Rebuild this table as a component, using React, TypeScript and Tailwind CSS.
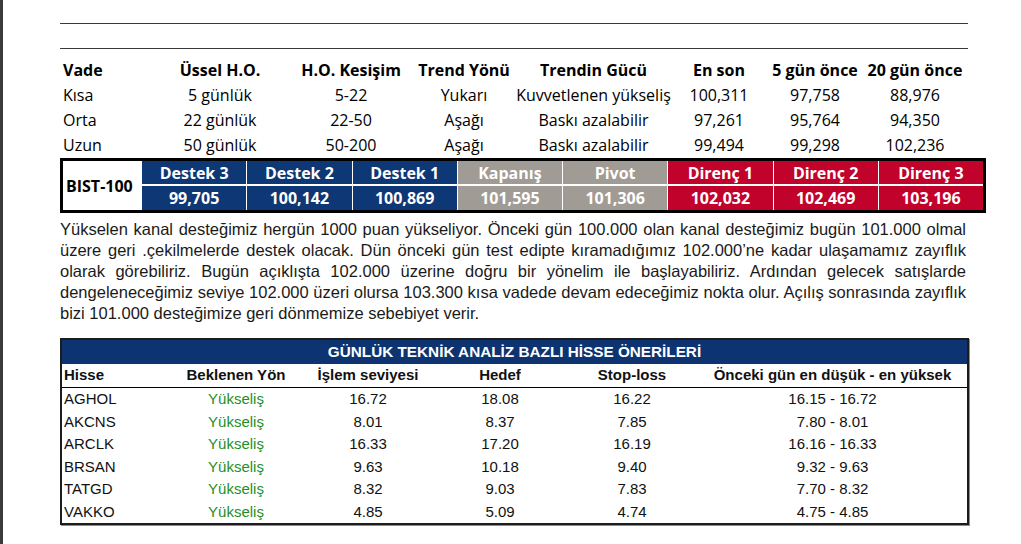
const trendRows = [
  ['Kısa', '5 günlük', '5-22', 'Yukarı', 'Kuvvetlenen yükseliş', '100,311', '97,758', '88,976'],
  ['Orta', '22 günlük', '22-50', 'Aşağı', 'Baskı azalabilir', '97,261', '95,764', '94,350'],
  ['Uzun', '50 günlük', '50-200', 'Aşağı', 'Baskı azalabilir', '99,494', '99,298', '102,236'],
];

const trendHeader = ['Vade', 'Üssel H.O.', 'H.O. Kesişim', 'Trend Yönü', 'Trendin Gücü', 'En son', '5 gün önce', '20 gün önce'];

const levels = [
  { label: 'Destek 3', value: '99,705', bg: 'bg-[#0e3775]' },
  { label: 'Destek 2', value: '100,142', bg: 'bg-[#0e3775]' },
  { label: 'Destek 1', value: '100,869', bg: 'bg-[#0e3775]' },
  { label: 'Kapanış', value: '101,595', bg: 'bg-[#a09b94]' },
  { label: 'Pivot', value: '101,306', bg: 'bg-[#a09b94]' },
  { label: 'Direnç 1', value: '102,032', bg: 'bg-[#c1022b]' },
  { label: 'Direnç 2', value: '102,469', bg: 'bg-[#c1022b]' },
  { label: 'Direnç 3', value: '103,196', bg: 'bg-[#c1022b]' },
];

const commentLines = [
  'Yükselen kanal desteğimiz hergün 1000 puan yükseliyor. Önceki gün 100.000 olan kanal desteğimiz bugün 101.000 olmal',
  'üzere geri .çekilmelerde destek olacak. Dün önceki gün test edipte kıramadığımız 102.000’ne kadar ulaşamamız zayıflık',
  'olarak görebiliriz. Bugün açıklışta 102.000 üzerine doğru bir yönelim ile başlayabiliriz. Ardından gelecek satışlarde',
  'dengeleneceğimiz seviye 102.000 üzeri olursa 103.300 kısa vadede devam edeceğimiz nokta olur. Açılış sonrasında zayıflık',
];

const picks = [
  ['AGHOL', '16.72', '18.08', '16.22', '16.15 - 16.72'],
  ['AKCNS', '8.01', '8.37', '7.85', '7.80 - 8.01'],
  ['ARCLK', '16.33', '17.20', '16.19', '16.16 - 16.33'],
  ['BRSAN', '9.63', '10.18', '9.40', '9.32 - 9.63'],
  ['TATGD', '8.32', '9.03', '7.83', '7.70 - 8.32'],
  ['VAKKO', '4.85', '5.09', '4.74', '4.75 - 4.85'],
];

const trendCols = 'grid grid-cols-[95px_130px_132px_94px_165px_86px_106px_94px]';
const pickCols = 'grid grid-cols-[108px_132px_132px_132px_132px_269px]';

export default function App() {
  return (
    <div className="flex min-h-[544px] bg-white text-[#111]">
      {/* left edge of the viewer */}
      <div className="w-[3px] shrink-0 bg-[#3b3b3b]" />

      <main className="ml-[57px] w-[926px] pt-[23px]">
        <div className="h-px w-[908px] bg-[#3a3a3a]" />
        <div className="mt-[24px] h-px w-[908px] bg-[#3a3a3a]" />

        {/* Trend table */}
        <div className="mt-[8px] font-['Open_Sans',sans-serif] text-[16px] text-black">
          <div className={`${trendCols} h-[25px] items-center font-bold`}>
            {trendHeader.map((h, i) => (
              <div key={h} className={i === 0 ? 'pl-[3px]' : 'flex justify-center whitespace-nowrap'}>
                {h}
              </div>
            ))}
          </div>
          {trendRows.map((row) => (
            <div key={row[0]} className={`${trendCols} h-[25px] items-center`}>
              {row.map((c, i) => (
                <div key={i} className={i === 0 ? 'pl-[3px]' : 'flex justify-center whitespace-nowrap'}>
                  {c}
                </div>
              ))}
            </div>
          ))}
        </div>

        {/* BIST-100 levels */}
        <div className="mt-px h-[55px] border-[3px] border-black font-['Open_Sans',sans-serif] text-[16px] font-bold">
          <div className="grid h-full grid-cols-[78px_repeat(8,1fr)] grid-rows-[23px_24px] gap-x-px gap-y-[2px] bg-white">
            <div className="row-span-2 flex items-center pl-[3px] text-black">BIST-100</div>
            {levels.map((l) => (
              <div key={l.label} className={`${l.bg} flex items-center justify-center text-white`}>
                {l.label}
              </div>
            ))}
            {levels.map((l) => (
              <div key={l.value} className={`${l.bg} flex items-center justify-center text-white`}>
                {l.value}
              </div>
            ))}
          </div>
        </div>

        {/* Comment */}
        <div className="mt-[6px] w-[906px] font-['Liberation_Sans',Arial,sans-serif] text-[16.5px] leading-[21px] text-[#1a1a1a]">
          {commentLines.map((line) => (
            <div key={line} className="whitespace-nowrap text-justify [text-align-last:justify]">
              {line}
            </div>
          ))}
          <div>bizi 101.000 desteğimize geri dönmemize sebebiyet verir.</div>
        </div>

        {/* Daily picks */}
        <div className="mt-[14px] w-[909px] border-2 border-[#1c1c1c] font-['Liberation_Sans',Arial,sans-serif] text-[15px] shadow-[1px_1px_0_#8a8a8a]">
          <div className="flex h-[24px] items-center justify-center bg-[#0d3470] text-[15.3px] font-bold text-white">
            GÜNLÜK TEKNİK ANALİZ BAZLI HİSSE ÖNERİLERİ
          </div>
          <div className={`${pickCols} h-[24px] items-center border-b border-black font-bold`}>
            <div className="pl-[2px]">Hisse</div>
            <div className="text-center">Beklenen Yön</div>
            <div className="text-center">İşlem seviyesi</div>
            <div className="text-center">Hedef</div>
            <div className="text-center">Stop-loss</div>
            <div className="text-center">Önceki gün en düşük - en yüksek</div>
          </div>
          {picks.map((p) => (
            <div key={p[0]} className={`${pickCols} h-[22.5px] items-center`}>
              <div className="pl-[2px]">{p[0]}</div>
              <div className="text-center text-[#1f8f1f]">Yükseliş</div>
              <div className="text-center">{p[1]}</div>
              <div className="text-center">{p[2]}</div>
              <div className="text-center">{p[3]}</div>
              <div className="text-center">{p[4]}</div>
            </div>
          ))}
        </div>
      </main>
    </div>
  );
}
